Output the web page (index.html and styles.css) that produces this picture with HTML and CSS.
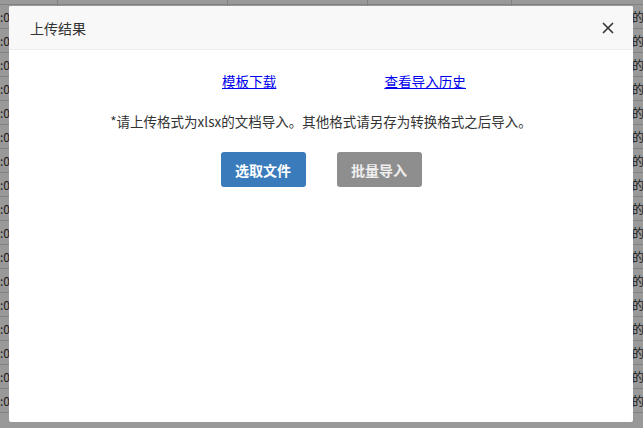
FILE: index.html
```html
<!DOCTYPE html>
<html lang="zh-CN">
  <head>
    <meta charset="UTF-8" />
    <title>上传结果</title>
    <link rel="stylesheet" href="styles.css">
  </head>
  <body>
    <!-- Background table (behind the mask) -->
    <div class="page">
      <div class="grid">
        <div class="row head">
          <div class="c c1"></div><div class="c c2">创建时间</div><div class="c c3">内容</div><div class="c c4">状态</div><div class="c c5">分类</div>
        </div>
        <div class="row"><div class="c c1">:00:15</div><div class="c c2">2022-07-22 22:00:08</div><div class="c c3">参加了下班路演</div><div class="c c4">驳回</div><div class="c c5">红字驳回与未跟踪的数据</div></div>
        <div class="row"><div class="c c1">:00:15</div><div class="c c2">2022-07-22 22:00:08</div><div class="c c3">参加了下班路演</div><div class="c c4">驳回</div><div class="c c5">红字驳回与未跟踪的数据</div></div>
        <div class="row"><div class="c c1">:00:15</div><div class="c c2">2022-07-22 22:00:08</div><div class="c c3">参加了下班路演</div><div class="c c4">驳回</div><div class="c c5">红字驳回与未跟踪的数据</div></div>
        <div class="row"><div class="c c1">:00:15</div><div class="c c2">2022-07-22 22:00:08</div><div class="c c3">参加了下班路演</div><div class="c c4">驳回</div><div class="c c5">红字驳回与未跟踪的数据</div></div>
        <div class="row"><div class="c c1">:00:15</div><div class="c c2">2022-07-22 22:00:08</div><div class="c c3">参加了下班路演</div><div class="c c4">驳回</div><div class="c c5">红字驳回与未跟踪的数据</div></div>
        <div class="row"><div class="c c1">:00:15</div><div class="c c2">2022-07-22 22:00:08</div><div class="c c3">参加了下班路演</div><div class="c c4">驳回</div><div class="c c5">红字驳回与未跟踪的数据</div></div>
        <div class="row"><div class="c c1">:00:15</div><div class="c c2">2022-07-22 22:00:08</div><div class="c c3">参加了下班路演</div><div class="c c4">驳回</div><div class="c c5">红字驳回与未跟踪的数据</div></div>
        <div class="row"><div class="c c1">:00:15</div><div class="c c2">2022-07-22 22:00:08</div><div class="c c3">参加了下班路演</div><div class="c c4">驳回</div><div class="c c5">红字驳回与未跟踪的数据</div></div>
        <div class="row"><div class="c c1">:00:15</div><div class="c c2">2022-07-22 22:00:08</div><div class="c c3">参加了下班路演</div><div class="c c4">驳回</div><div class="c c5">红字驳回与未跟踪的数据</div></div>
        <div class="row"><div class="c c1">:00:15</div><div class="c c2">2022-07-22 22:00:08</div><div class="c c3">参加了下班路演</div><div class="c c4">驳回</div><div class="c c5">红字驳回与未跟踪的数据</div></div>
        <div class="row"><div class="c c1">:00:15</div><div class="c c2">2022-07-22 22:00:08</div><div class="c c3">参加了下班路演</div><div class="c c4">驳回</div><div class="c c5">红字驳回与未跟踪的数据</div></div>
        <div class="row"><div class="c c1">:00:15</div><div class="c c2">2022-07-22 22:00:08</div><div class="c c3">参加了下班路演</div><div class="c c4">驳回</div><div class="c c5">红字驳回与未跟踪的数据</div></div>
        <div class="row"><div class="c c1">:00:15</div><div class="c c2">2022-07-22 22:00:08</div><div class="c c3">参加了下班路演</div><div class="c c4">驳回</div><div class="c c5">红字驳回与未跟踪的数据</div></div>
        <div class="row"><div class="c c1">:00:15</div><div class="c c2">2022-07-22 22:00:08</div><div class="c c3">参加了下班路演</div><div class="c c4">驳回</div><div class="c c5">红字驳回与未跟踪的数据</div></div>
        <div class="row"><div class="c c1">:00:15</div><div class="c c2">2022-07-22 22:00:08</div><div class="c c3">参加了下班路演</div><div class="c c4">驳回</div><div class="c c5">红字驳回与未跟踪的数据</div></div>
        <div class="row"><div class="c c1">:00:15</div><div class="c c2">2022-07-22 22:00:08</div><div class="c c3">参加了下班路演</div><div class="c c4">驳回</div><div class="c c5">红字驳回与未跟踪的数据</div></div>
        <div class="row"><div class="c c1">:00:15</div><div class="c c2">2022-07-22 22:00:08</div><div class="c c3">参加了下班路演</div><div class="c c4">驳回</div><div class="c c5">红字驳回与未跟踪的数据</div></div>
      </div>
    </div>

    <div class="mask"></div>

    <!-- Upload dialog -->
    <div class="dialog">
      <div class="dialog-header">
        <span class="dialog-title">上传结果</span>
        <span class="dialog-close">
          <svg width="12" height="12" viewBox="0 0 12 12">
            <path d="M1 1 L11 11 M11 1 L1 11" stroke="#333" stroke-width="1.6" fill="none" />
          </svg>
        </span>
      </div>
      <div class="dialog-body">
        <div class="links">
          <a href="#">模板下载</a>
          <a href="#">查看导入历史</a>
        </div>
        <p class="tip">*请上传格式为xlsx的文档导入。其他格式请另存为转换格式之后导入。</p>
        <div class="actions">
          <button class="btn btn-primary">选取文件</button>
          <button class="btn btn-disabled">批量导入</button>
        </div>
      </div>
    </div>
  </body>
</html>
```

FILE: styles.css
```css
/* Global */
body {
  margin: 0;
  padding: 0;
  font-family: "Noto Sans CJK SC", "Noto Sans", sans-serif;
  background-color: #ffffff;
  overflow: hidden;
  height: 428px;
  position: relative;
}

/* Background table */
.page {
  width: 643px;
  height: 428px;
  overflow: hidden;
}

.grid {
  margin-top: -19px;
}

.row {
  display: flex;
  height: 24px;
  border-bottom: 1px solid #d8d8d8;
  box-sizing: border-box;
  font-size: 12px;
  color: #333;
}

.c {
  line-height: 23px;
  padding: 0 8px;
  border-right: 1px solid #d8d8d8;
  white-space: nowrap;
  overflow: hidden;
  flex-shrink: 0;
  box-sizing: border-box;
}

.c1 { width: 58px; padding-left: 0; }
.c2 { width: 170px; padding-left: 20px; }
.c3 { width: 140px; }
.c4 { width: 144px; padding-left: 60px; }
.c5 { width: 200px; padding-left: 24px; border-right: none; }

.head .c { font-weight: bold; }

/* Mask over the page */
.mask {
  position: absolute;
  top: 0;
  left: 0;
  right: 0;
  bottom: 0;
  background-color: rgba(0, 0, 0, 0.4);
}

/* Dialog */
.dialog {
  position: absolute;
  top: 6px;
  left: 9px;
  width: 624px;
  height: 416px;
  background-color: #ffffff;
  border-radius: 2px;
  overflow: hidden;
}

.dialog-header {
  display: flex;
  align-items: center;
  justify-content: space-between;
  height: 44px;
  padding: 0 19px 0 21px;
  background-color: #f8f8f8;
  border-bottom: 1px solid #eeeeee;
  box-sizing: border-box;
}

.dialog-title {
  font-size: 14px;
  color: #333333;
}

.dialog-close {
  display: flex;
  width: 12px;
  height: 12px;
  cursor: pointer;
}

.dialog-body {
  padding-top: 16px;
}

.links {
  display: flex;
  gap: 108px;
  padding-left: 213px;
  height: 30px;
  align-items: center;
}

.links a {
  font-size: 13.6px;
  color: #0000ee;
  text-decoration: underline;
}

.tip {
  margin: 0;
  margin-top: 13px;
  font-size: 13.5px;
  color: #333333;
  text-align: center;
  line-height: 24px;
}

.actions {
  display: flex;
  justify-content: center;
  gap: 31px;
  margin-top: 19px;
}

.btn {
  width: 85px;
  height: 35px;
  border: none;
  border-radius: 3px;
  color: #ffffff;
  font-family: "Noto Sans CJK SC", "Noto Sans", sans-serif;
  font-size: 14px;
  font-weight: bold;
  cursor: pointer;
}

.btn-primary {
  background-color: #3a7bbb;
}

.btn-disabled {
  background-color: #8e8e8e;
  color: #eeeeee;
}
```
